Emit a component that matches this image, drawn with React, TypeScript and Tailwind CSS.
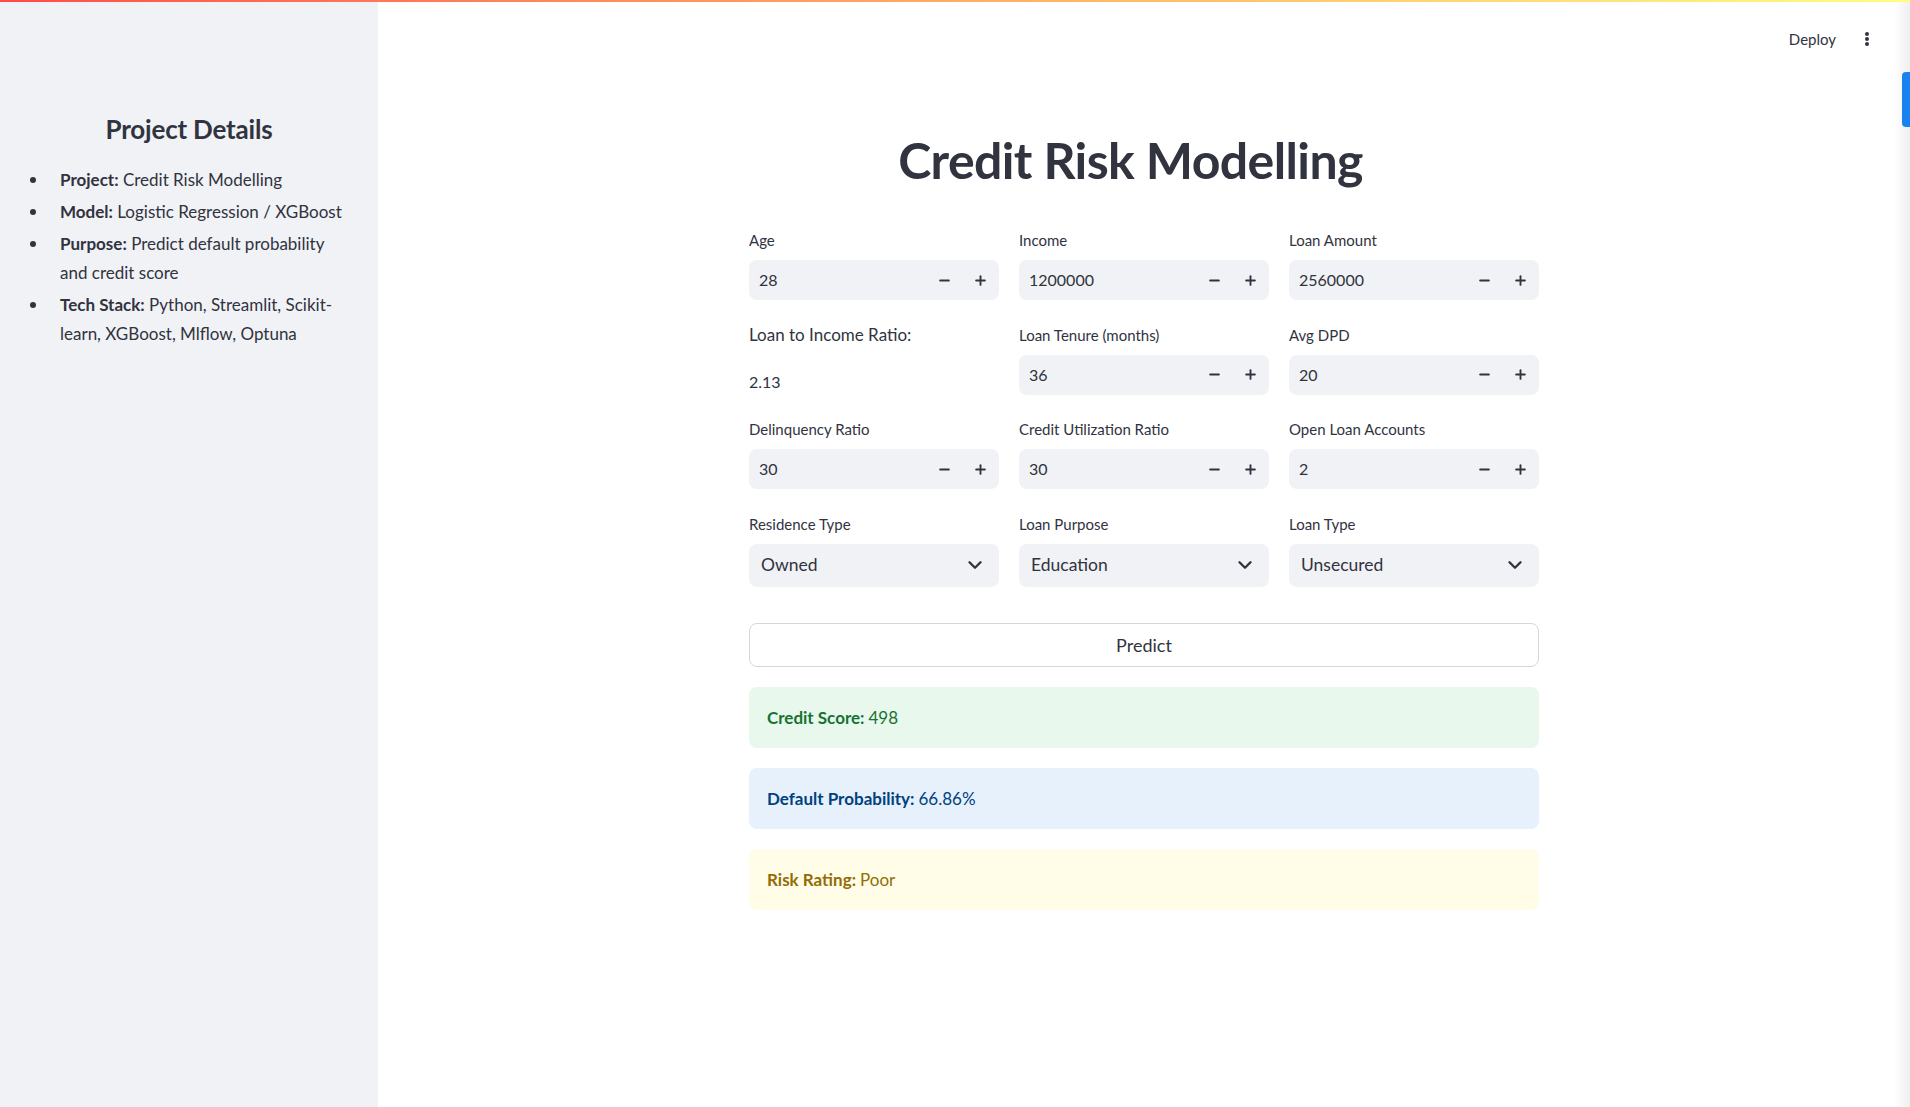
import { ChevronDown, Minus, Plus } from "lucide-react";

const font = { fontFamily: '"Lato", "Noto Sans", sans-serif' };

function FieldLabel({ children }: { children: React.ReactNode }) {
  return <div className="h-[20px] mb-[10px] text-[15px] leading-[20px] text-[#31333f]">{children}</div>;
}

function NumberField({ label, value }: { label: string; value: string }) {
  return (
    <div>
      <FieldLabel>{label}</FieldLabel>
      <div className="flex h-[40px] items-center rounded-lg bg-[#f0f2f6] text-[#31333f]">
        <span className="flex-1 pl-[10px] text-[16px]">{value}</span>
        <button className="flex h-full w-9 items-center justify-center">
          <Minus size={15} strokeWidth={3} />
        </button>
        <button className="mr-[1px] flex h-full w-9 items-center justify-center">
          <Plus size={15} strokeWidth={3} />
        </button>
      </div>
    </div>
  );
}

function SelectField({ label, value }: { label: string; value: string }) {
  return (
    <div>
      <FieldLabel>{label}</FieldLabel>
      <div className="flex h-[43px] items-center rounded-lg bg-[#f0f2f6] pl-3 pr-[13px] text-[#31333f]">
        <span className="flex-1 text-[17.5px]">{value}</span>
        <ChevronDown size={22} strokeWidth={2.6} />
      </div>
    </div>
  );
}

function Alert({ bg, color, title, value }: { bg: string; color: string; title: string; value: string }) {
  return (
    <div className={`flex h-[61px] items-center rounded-lg px-[18px] text-[17px] ${bg} ${color}`}>
      <span className="font-bold">{title}</span>
      <span className="ml-1">{value}</span>
    </div>
  );
}

const details = [
  { k: "Project:", v: "Credit Risk Modelling" },
  { k: "Model:", v: "Logistic Regression / XGBoost" },
  { k: "Purpose:", v: "Predict default probability and credit score" },
  { k: "Tech Stack:", v: "Python, Streamlit, Scikit-learn, XGBoost, Mlflow, Optuna" },
];

export default function App() {
  return (
    <div className="relative flex h-[1107px] w-full overflow-hidden bg-white text-[#31333f]" style={font}>
      <div className="absolute left-0 right-0 top-0 z-10 h-[2px] bg-gradient-to-r from-[#ff4b4b] to-[#fffd80]" />

      {/* Sidebar */}
      <aside className="w-[378px] shrink-0 bg-[#f0f2f6]">
        <h3 className="mt-[111px] text-center text-[26px] font-bold leading-[36px] tracking-[-0.2px]">Project Details</h3>
        <ul className="mt-[18px] space-y-[3px] pr-[34px]">
          {details.map((d) => (
            <li key={d.k} className="flex text-[17px] leading-[29px]">
              <span className="ml-[30px] mr-[24px] mt-[11.5px] h-[6px] w-[6px] shrink-0 rounded-full bg-[#31333f]" />
              <p>
                <b className="font-bold">{d.k}</b> {d.v}
              </p>
            </li>
          ))}
        </ul>
      </aside>

      {/* Main */}
      <main className="relative flex-1">
        <header className="flex h-[78px] items-center justify-end pr-[41px]">
          <span className="text-[15px]">Deploy</span>
          <svg width="4" height="14" viewBox="0 0 4 14" className="ml-[29px]" fill="#31333f">
            <circle cx="2" cy="2" r="2" />
            <circle cx="2" cy="7" r="2" />
            <circle cx="2" cy="12" r="2" />
          </svg>
        </header>

        <div className="mx-auto w-[790px]">
          <h1 className="mt-[52px] pr-[27px] text-center text-[50px] font-bold leading-[60px] tracking-[-0.6px]">
            Credit Risk Modelling
          </h1>

          <div className="mt-[40px] flex flex-col gap-[24.5px]">
            <div className="grid grid-cols-3 gap-5">
              <NumberField label="Age" value="28" />
              <NumberField label="Income" value="1200000" />
              <NumberField label="Loan Amount" value="2560000" />
            </div>

            <div className="grid grid-cols-3 gap-5">
              <div>
                <div className="text-[17px] leading-[20px]">Loan to Income Ratio:</div>
                <div className="mt-[27px] text-[16px] leading-[20px]">2.13</div>
              </div>
              <NumberField label="Loan Tenure (months)" value="36" />
              <NumberField label="Avg DPD" value="20" />
            </div>

            <div className="grid grid-cols-3 gap-5">
              <NumberField label="Delinquency Ratio" value="30" />
              <NumberField label="Credit Utilization Ratio" value="30" />
              <NumberField label="Open Loan Accounts" value="2" />
            </div>

            <div className="grid grid-cols-3 gap-5">
              <SelectField label="Residence Type" value="Owned" />
              <SelectField label="Loan Purpose" value="Education" />
              <SelectField label="Loan Type" value="Unsecured" />
            </div>
          </div>

          <button className="mt-[36.5px] flex h-[44px] w-full items-center justify-center rounded-lg border border-[#d5d6d9] bg-white text-[18px]">
            Predict
          </button>

          <div className="mt-5 flex flex-col gap-5">
            <Alert bg="bg-[#e8f8ed]" color="text-[#177233]" title="Credit Score:" value="498" />
            <Alert bg="bg-[#e7f1fc]" color="text-[#004280]" title="Default Probability:" value="66.86%" />
            <Alert bg="bg-[#fffce7]" color="text-[#926c05]" title="Risk Rating:" value="Poor" />
          </div>
        </div>

        <div className="absolute right-0 top-0 h-full w-[16px] bg-gradient-to-r from-transparent to-[#efefef]" />
        <div className="absolute right-0 top-[72px] h-[55px] w-[8px] rounded-l-[4px] bg-[#1a82f0]" />
      </main>
    </div>
  );
}
